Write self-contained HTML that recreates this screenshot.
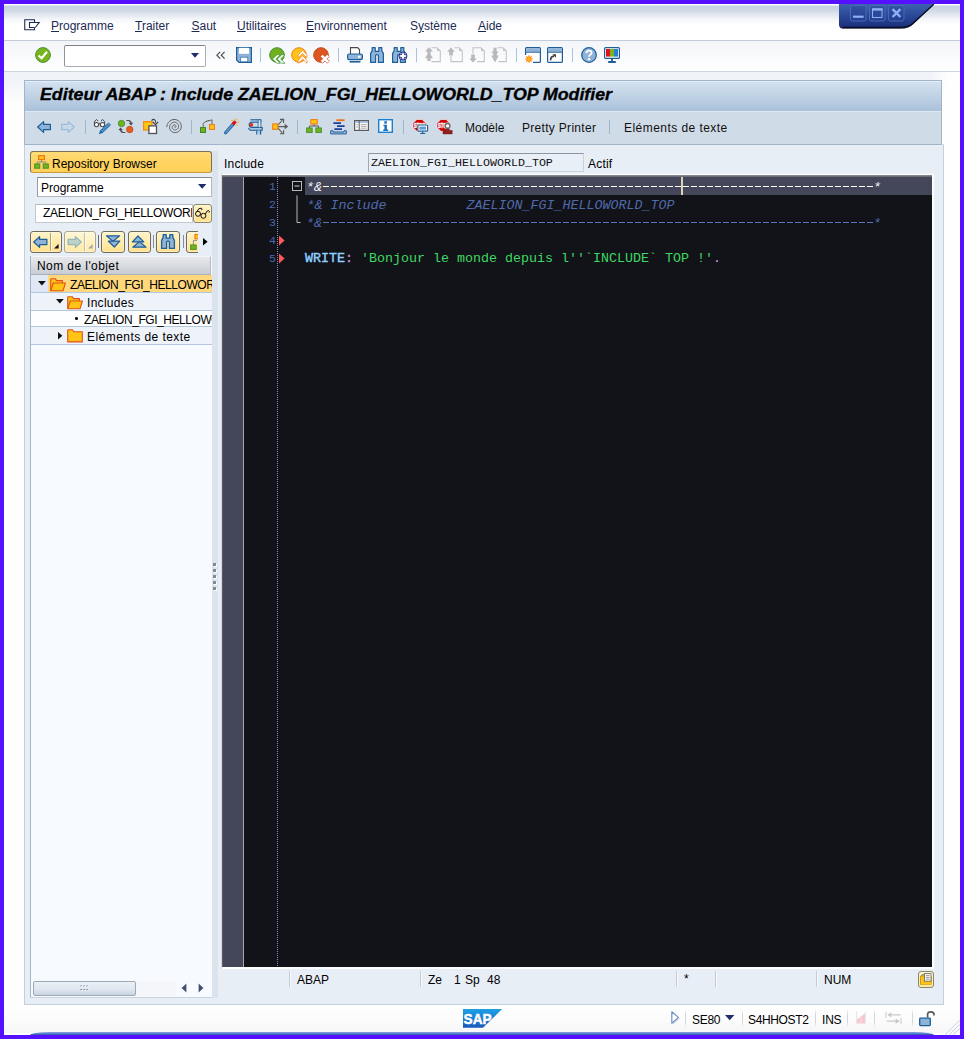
<!DOCTYPE html>
<html><head><meta charset="utf-8">
<style>
*{box-sizing:border-box;margin:0;padding:0}
html,body{width:964px;height:1039px;overflow:hidden;background:#5511ff}
body{font-family:"Liberation Sans",sans-serif;font-size:12px;color:#000;position:relative}
.a{position:absolute}
.t{position:absolute;white-space:pre;line-height:14px;height:14px}
.hl{position:absolute;left:4px;width:956px;height:1px}
.m{color:#1d2a55}
.vs{position:absolute;width:1px;background:#9db6d0}
svg{position:absolute;overflow:visible}
</style></head><body>
<!-- window background -->
<div class="a" style="left:4px;top:4px;width:956px;height:1031px;background:#fefefe"></div>
<div class="a" style="left:4px;top:4px;width:956px;height:36px;background:linear-gradient(#ffffff 0px,#ffffff 1px,#c7d2e1 2px,#cdd7e4 6px,#e3e8ef 11px,#f6f8fa 16px,#ffffff 21px)"></div>
<div class="hl" style="top:40px;background:#c3ccd8"></div>
<div class="a" style="left:4px;top:41px;width:956px;height:30px;background:linear-gradient(#f3f5f9,#ffffff)"></div>
<div class="hl" style="top:71px;background:#cdd5df"></div>
<div class="a" style="left:4px;top:72px;width:956px;height:32px;background:linear-gradient(#f0f3f8,#f0f3f8 25%,#fefefe)"></div>
<!-- menu bar -->
<svg style="left:24px;top:19px" width="17" height="12" viewBox="0 0 17 12"><path d="M10.5 3.5V0.75H0.75V10.75H10.5V8.5M10.5 8.5H5.5V3.5H15.2L11.2 8.5" fill="none" stroke="#1d2a55" stroke-width="1.1"/></svg>
<div class="t m" style="left:51px;top:19px"><u>P</u>rogramme</div>
<div class="t m" style="left:135px;top:19px"><u>T</u>raiter</div>
<div class="t m" style="left:191.5px;top:19px"><u>S</u>aut</div>
<div class="t m" style="left:237px;top:19px"><u>U</u>tilitaires</div>
<div class="t m" style="left:306px;top:19px"><u>E</u>nvironnement</div>
<div class="t m" style="left:410px;top:19px">S<u>y</u>stème</div>
<div class="t m" style="left:478px;top:19px"><u>A</u>ide</div>

<!-- standard toolbar -->
<svg style="left:35px;top:47px" width="16" height="16" viewBox="0 0 16 16"><circle cx="8" cy="8" r="7.4" fill="#78b41c" stroke="#4c9330" stroke-width="1"/><path d="M3.6 8.4L6.6 11.2L12 4.8" fill="none" stroke="#fff" stroke-width="2.1"/></svg>
<div class="a" style="left:64px;top:45px;width:142px;height:22px;background:#fff;border:1px solid #a9adb3;border-top-color:#7d8187;border-left-color:#8e9298;border-radius:2px"></div>
<svg style="left:191px;top:53px" width="8" height="5" viewBox="0 0 8 5"><path d="M0 0H8L4 4.8Z" fill="#1f2d6b"/></svg>
<svg style="left:216px;top:51px" width="10" height="9" viewBox="0 0 10 9"><path d="M4.2 0.8L0.9 4.2L4.2 7.6M8.6 0.8L5.3 4.2L8.6 7.6" fill="none" stroke="#4a4a4a" stroke-width="1.2"/></svg>
<svg style="left:235.5px;top:47px" width="16" height="16" viewBox="0 0 16 16"><path d="M0.6 0.6H15.4V15.4H3L0.6 13Z" fill="#8fb2d8" stroke="#1b5e98" stroke-width="1.2"/><rect x="3" y="0.8" width="10" height="6" fill="#fff"/><rect x="4.8" y="10.2" width="7" height="4.6" fill="#fff" stroke="#1b5e98" stroke-width="0.6"/></svg>
<div class="vs" style="left:260px;top:48px;height:14px;background:#a9c3dd"></div>
<svg style="left:269px;top:47px" width="16" height="16" viewBox="0 0 16 16"><circle cx="8" cy="8" r="7.3" fill="#70b01d" stroke="#3f8e33" stroke-width="1"/><path d="M8 7.7L3.5 12L8 16.3H11.3L6.8 12L11.3 7.7ZM12.8 7.7L8.3 12L12.8 16.3H16.1L11.6 12L16.1 7.7Z" fill="#fff" stroke="#3f8e33" stroke-width="0.7"/></svg>
<svg style="left:291px;top:47px" width="16" height="16" viewBox="0 0 16 16"><circle cx="8" cy="8" r="7.3" fill="#ffc414" stroke="#ef7d1c" stroke-width="1"/><path d="M11.6 3.3L16 7.8V10.9L11.6 6.7L7.2 10.9V7.8ZM11.6 8.7L16 13.2V16.3L11.6 12.1L7.2 16.3V13.2Z" fill="#fff" stroke="#ef7d1c" stroke-width="0.7"/></svg>
<svg style="left:313px;top:47px" width="16" height="16" viewBox="0 0 16 16"><circle cx="8" cy="8" r="7.3" fill="#dc571f" stroke="#c9471b" stroke-width="1"/><path d="M7.4 9.5L9.6 7.4L11.9 9.7L14.2 7.4L16.4 9.5L14.1 11.8L16.4 14.1L14.2 16.2L11.9 13.9L9.6 16.2L7.4 14.1L9.7 11.8Z" fill="#fff" stroke="#c9471b" stroke-width="0.6"/></svg>
<div class="vs" style="left:338px;top:48px;height:14px;background:#a9c3dd"></div>
<svg style="left:347px;top:47px" width="16" height="16" viewBox="0 0 16 16"><path d="M3.5 7V0.6H10.5L12.5 2.6V7" fill="#fff" stroke="#4a4a4a" stroke-width="1.1"/><rect x="0.6" y="7" width="14.8" height="5.6" rx="1.6" fill="#8fb2d8" stroke="#1b5e98" stroke-width="1.2"/><rect x="11" y="8.8" width="2.6" height="2" fill="#fff"/><path d="M2.6 14.8H13.4" stroke="#1b5e98" stroke-width="1.6"/></svg>
<svg style="left:370px;top:47px" width="14" height="16" viewBox="0 0 14 16"><path d="M2.2 0.6H5.2V4.4H8.8V0.6H11.8V3.6L13.4 6.6V15.4H8.4V8.6Q8.4 7.6 7 7.6Q5.6 7.6 5.6 8.6V15.4H0.6V6.6L2.2 3.6Z" fill="#8fb2d8" stroke="#1b5e98" stroke-width="1.2" stroke-linejoin="round"/></svg>
<svg style="left:392px;top:47px" width="16" height="16" viewBox="0 0 16 16"><path d="M2.2 0.6H5.2V4.4H8.8V0.6H11.8V3.6L13.4 6.6V15.4H8.4V8.6Q8.4 7.6 7 7.6Q5.6 7.6 5.6 8.6V15.4H0.6V6.6L2.2 3.6Z" fill="#8fb2d8" stroke="#1b5e98" stroke-width="1.2" stroke-linejoin="round"/><circle cx="11" cy="9" r="4" fill="#fff" stroke="#1f2f8f" stroke-width="1"/><path d="M11 5.8V12.2M7.8 9H14.2" stroke="#1f2f8f" stroke-width="3.4"/><path d="M11 6.2V11.8M8.2 9H13.8" stroke="#fff" stroke-width="2.2"/></svg>
<div class="vs" style="left:416px;top:48px;height:14px;background:#a9c3dd"></div>
<svg style="left:425px;top:47px" width="16" height="16" viewBox="0 0 16 16"><path d="M6.5 0.7H12L15.3 4V14.6H6.5" fill="none" stroke="#c3c3c3" stroke-width="1.1"/><path d="M12 0.7V4H15.3Z" fill="#c3c3c3"/><path d="M4 0.3L8 4.6H5.6V7.4L8 11.3H5.6V14H2.4V11.3H0L2.4 7.4V4.6H0Z" fill="#b9b9b9"/></svg>
<svg style="left:447px;top:47px" width="16" height="16" viewBox="0 0 16 16"><path d="M7.5 0.7H12L15.3 4V14.6H4V9" fill="none" stroke="#c3c3c3" stroke-width="1.1"/><path d="M12 0.7V4H15.3Z" fill="#c3c3c3"/><path d="M4 0.6L7.8 4.8H5.8V8.6H2.2V4.8H0.2Z" fill="#b9b9b9"/></svg>
<svg style="left:469px;top:47px" width="16" height="16" viewBox="0 0 16 16"><path d="M4 6.5V0.7H12L15.3 4V14.6H8" fill="none" stroke="#c3c3c3" stroke-width="1.1"/><path d="M12 0.7V4H15.3Z" fill="#c3c3c3"/><path d="M4 15.6L7.8 11.4H5.8V7.4H2.2V11.4H0.2Z" fill="#b9b9b9"/></svg>
<svg style="left:491px;top:47px" width="16" height="16" viewBox="0 0 16 16"><path d="M6.5 0.7H12L15.3 4V14.6H7.5" fill="none" stroke="#c3c3c3" stroke-width="1.1"/><path d="M12 0.7V4H15.3Z" fill="#c3c3c3"/><path d="M2.4 0.8H5.6V4.6H7.6L5.8 7V8.6H7.8L4 15.6L0.2 8.6H2.2V7L0.4 4.6H2.4Z" fill="#b9b9b9"/></svg>
<div class="vs" style="left:516px;top:48px;height:14px;background:#a9c3dd"></div>
<svg style="left:525px;top:47px" width="16" height="16" viewBox="0 0 16 16"><path d="M0.6 8V1.6Q0.6 0.6 1.6 0.6H14.4Q15.4 0.6 15.4 1.6V14.4Q15.4 15.4 14.4 15.4H8" fill="#fff" stroke="#1b5e98" stroke-width="1.2"/><rect x="1.2" y="1.2" width="13.6" height="3.6" fill="#8fb2d8"/><path d="M0.6 5.2H15.4" stroke="#1b5e98" stroke-width="1"/><circle cx="4" cy="12" r="2.6" fill="#ff9c12"/><path d="M4 8.2V15.8M0.2 12H7.8M1.3 9.3L6.7 14.7M6.7 9.3L1.3 14.7" stroke="#ff8a10" stroke-width="1.2"/><circle cx="4" cy="12" r="1.7" fill="#ffb420"/></svg>
<svg style="left:547px;top:47px" width="16" height="16" viewBox="0 0 16 16"><rect x="0.6" y="0.6" width="14.8" height="14.8" rx="1" fill="#fff" stroke="#1b5e98" stroke-width="1.2"/><rect x="1.2" y="1.2" width="13.6" height="3.6" fill="#8fb2d8"/><path d="M0.6 5.2H15.4" stroke="#1b5e98" stroke-width="1"/><path d="M3.6 13.4Q3.4 9.4 7 9.2" fill="none" stroke="#3c3c3c" stroke-width="1.7"/><path d="M5.4 7.2H9V10.8Z" fill="#3c3c3c"/></svg>
<div class="vs" style="left:572px;top:48px;height:14px;background:#a9c3dd"></div>
<svg style="left:581px;top:47px" width="16" height="16" viewBox="0 0 16 16"><circle cx="8" cy="8" r="7.3" fill="#8fb2d8" stroke="#1b5e98" stroke-width="1.2"/><path d="M5.4 6.2Q5.4 3.6 8 3.6Q10.6 3.6 10.6 5.8Q10.6 7.2 9.2 7.8Q8 8.4 8 9.8" fill="none" stroke="#fff" stroke-width="1.8"/><circle cx="8" cy="12.2" r="1.2" fill="#fff"/></svg>
<svg style="left:603.5px;top:47px" width="16" height="16" viewBox="0 0 16 16"><rect x="0.6" y="0.6" width="14.8" height="10.8" rx="1" fill="#fff" stroke="#1b5e98" stroke-width="1.2"/><rect x="2" y="2" width="4" height="7.6" fill="#e0121a"/><rect x="6" y="2" width="4" height="7.6" fill="#7ab51d"/><rect x="10" y="2" width="4" height="7.6" fill="#2b7fd0"/><path d="M8 11.4V14.4M4.2 15H11.8" stroke="#1b5e98" stroke-width="1.8"/></svg>

<!-- window controls -->
<svg style="left:830px;top:0px" width="120" height="36" viewBox="830 0 120 36">
<defs><linearGradient id="wg" x1="0" y1="0" x2="0" y2="1"><stop offset="0" stop-color="#3e62b0"/><stop offset="0.5" stop-color="#2a4896"/><stop offset="1" stop-color="#1a2f7c"/></linearGradient>
<linearGradient id="bg2" x1="0" y1="0" x2="0" y2="1"><stop offset="0" stop-color="#3353a3"/><stop offset="1" stop-color="#223d90"/></linearGradient></defs>
<path d="M839.5 4H934.5L914 23.5Q909 28.8 901 28.8H843Q839.5 28.8 839.5 25.5Z" fill="#070b25" opacity="0.85"/>
<path d="M839 4H934L913 23Q908.5 27.5 901 27.5H842.5Q839 27.5 839 24.5Z" fill="url(#wg)"/><path d="M933.6 4.4L913 23.2Q908.5 27.4 901 27.4H843" fill="none" stroke="#05081c" stroke-width="1.3" opacity="0.9"/>
<rect x="850.5" y="5.5" width="15.5" height="15.5" rx="2" fill="url(#bg2)" stroke="#4d6cb9" stroke-width="0.9"/>
<rect x="869.5" y="5.5" width="15.5" height="15.5" rx="2" fill="url(#bg2)" stroke="#4d6cb9" stroke-width="0.9"/>
<rect x="888.5" y="5.5" width="15.5" height="15.5" rx="2" fill="url(#bg2)" stroke="#4d6cb9" stroke-width="0.9"/>
<rect x="853" y="15.6" width="10.6" height="2.2" fill="#8db0f4"/>
<rect x="872.5" y="9" width="9.5" height="8.5" fill="none" stroke="#8db0f4" stroke-width="1.1"/><rect x="872" y="8.4" width="10.5" height="2.2" fill="#8db0f4"/>
<path d="M892.6 9.2L900.4 17M900.4 9.2L892.6 17" stroke="#8db0f4" stroke-width="2.4"/>
</svg>

<!-- main container -->
<div class="a" style="left:930px;top:72px;width:30px;height:32px;background:linear-gradient(90deg,rgba(254,254,254,0),#fefefe 60%)"></div>
<div class="a" style="left:24px;top:144px;width:920px;height:861px;background:#e8eef6;border:1px solid #c3cfdc;border-top:none"></div>
<div class="a" style="left:24px;top:80px;width:918px;height:65px;border:1px solid #a1b5c9"></div>
<div class="a" style="left:25px;top:81px;width:916px;height:30px;background:linear-gradient(#d3e1ef 0%,#c3d4e6 40%,#abc2dc 100%);border-top:1px solid #e6eef6"></div>
<div class="a" style="left:25px;top:111px;width:916px;height:33px;background:#cfdbe7;border-top:1px solid #dfe8f0"></div>
<div class="t" style="left:40px;top:85px;font-size:16px;line-height:20px;height:20px;font-weight:bold;font-style:italic;-webkit-text-stroke:0.3px #000;transform-origin:0 0;transform:scaleX(1.11)">Editeur ABAP : Include ZAELION_FGI_HELLOWORLD_TOP Modifier</div>

<!-- application toolbar -->
<svg style="left:37px;top:121px" width="14" height="12" viewBox="0 0 14 12"><path d="M0.7 6L6.6 0.6V3.4H13.4V8.6H6.6V11.4Z" fill="#8fb2d8" stroke="#1b5e98" stroke-width="1.2" stroke-linejoin="round"/></svg>
<svg style="left:61px;top:121px" width="14" height="12" viewBox="0 0 14 12"><path d="M13.3 6L7.4 0.6V3.4H0.6V8.6H7.4V11.4Z" fill="#c6d8ea" stroke="#9dbbd7" stroke-width="1.2" stroke-linejoin="round"/></svg>
<div class="vs" style="left:85px;top:120px;height:14px"></div>
<svg style="left:94px;top:118px" width="17" height="17" viewBox="0 0 17 17"><path d="M0.4 5.2V3.6L2.5 1.4L4 3M7 3L8.5 1.4L10.7 3.6V5.2M4.6 6.2Q5.5 5.2 6.4 6.2" fill="none" stroke="#4a4a4a" stroke-width="1"/><circle cx="2.5" cy="6.6" r="2.15" fill="#fff" stroke="#4a4a4a" stroke-width="1.1"/><circle cx="8.5" cy="6.6" r="2.15" fill="#fff" stroke="#4a4a4a" stroke-width="1.1"/><path d="M8.57 14.6L6.57 12.5L14.5 4.95L16.5 7.05Z" fill="#5b9bd5" stroke="#0f5f95" stroke-width="0.8"/><path d="M5.25 15.75L6.57 12.5L8.57 14.6Z" fill="#1b6aa8" stroke="#0f5f95" stroke-width="0.6"/><path d="M8.1 11L10.1 13.1M9.7 9.5L11.7 11.6M11.3 8L13.3 10.1M12.9 6.5L14.9 8.6" stroke="#0f5f95" stroke-width="0.7"/></svg>
<svg style="left:118px;top:119px" width="16" height="15" viewBox="0 0 16 15"><circle cx="3.5" cy="4.5" r="3.2" fill="#72b21e" stroke="#3f8a2e" stroke-width="0.8"/><circle cx="11.75" cy="10.5" r="3.2" fill="#e0601c" stroke="#c9421b" stroke-width="0.8"/><path d="M8.4 1.5H10.4Q13 1.8 13 4.4" fill="none" stroke="#4a4a4a" stroke-width="1.2"/><path d="M10.7 3.7H15.3L13 6.5Z" fill="#4a4a4a"/><path d="M7.4 13.5H5.2Q2.6 13.2 2.6 10.6" fill="none" stroke="#4a4a4a" stroke-width="1.2"/><path d="M0.3 11.3H4.9L2.6 8.5Z" fill="#4a4a4a"/></svg>
<svg style="left:143px;top:119px" width="16" height="16" viewBox="0 0 16 16"><rect x="0.6" y="2.6" width="8.4" height="8.4" fill="#ffc414" stroke="#f08c12" stroke-width="1.2"/><rect x="5.9" y="6.9" width="7.6" height="7.6" fill="#fff" stroke="#505050" stroke-width="1.3"/><path d="M8.6 1.6Q9.6 0.2 11.2 0.4Q12.8 0.9 12.6 3.6" fill="none" stroke="#404040" stroke-width="1.1"/><path d="M9.8 2.8L12.5 5.6L15.2 2.8" fill="none" stroke="#404040" stroke-width="1.2"/></svg>
<svg style="left:166px;top:118px" width="18" height="18" viewBox="0 0 18 18"><path d="M0.85 8.75 L1.00 7.61 L1.31 6.50 L1.77 5.47 L2.38 4.52 L3.11 3.67 L3.96 2.95 L4.89 2.37 L5.88 1.93 L6.93 1.65 L7.99 1.52 L9.05 1.55 L10.09 1.73 L11.08 2.06 L12.00 2.53 L12.84 3.12 L13.57 3.83 L14.19 4.62 L14.68 5.49 L15.03 6.41 L15.24 7.37 L15.31 8.34 L15.24 9.30 L15.03 10.22 L14.69 11.10 L14.23 11.91 L13.66 12.64 L12.99 13.27 L12.25 13.79 L11.45 14.19 L10.61 14.47 L9.74 14.61 L8.87 14.63 L8.02 14.53 L7.20 14.30 L6.43 13.95 L5.73 13.51 L5.11 12.97 L4.58 12.35 L4.15 11.67 L3.84 10.94 L3.63 10.18 L3.54 9.41 L3.56 8.64 L3.69 7.89 L3.93 7.18 L4.27 6.53 L4.69 5.93 L5.20 5.41 L5.76 4.98 L6.38 4.64 L7.02 4.39 L7.69 4.25 L8.37 4.20 L9.03 4.26 L9.67 4.41 L10.27 4.65 L10.83 4.97 L11.32 5.37 L11.74 5.82 L12.08 6.33 L12.35 6.87 L12.52 7.44 L12.61 8.01 L12.61 8.59 L12.53 9.15 L12.37 9.68 L12.14 10.18 L11.84 10.62 L11.49 11.01 L11.09 11.34 L10.65 11.60 L10.18 11.79 L9.70 11.91 L9.22 11.95 L8.75 11.93 L8.30 11.83 L7.87 11.67 L7.48 11.45 L7.13 11.18 L6.84 10.88 L6.59 10.53 L6.41 10.17 L6.29 9.79 L6.22 9.40 L6.22 9.02 L6.27 8.65 L6.37 8.30 L6.53 7.98 L6.72 7.69 L6.95 7.44 L7.20 7.23 L7.48 7.07 L7.77 6.96 L8.06 6.90 L8.35 6.88 L8.63 6.90 L8.90 6.97 L9.14 7.07 L9.36 7.20 L9.55 7.36 L9.70 7.55 L9.82 7.74 L9.91 7.94 L9.96 8.15 L9.97 8.35 L9.95 8.55 L9.91 8.73 L9.84 8.89 L9.74 9.03 L9.64 9.14 L9.52 9.24 L9.39 9.30 L9.26 9.34 L9.13 9.36 L9.02 9.35 L8.91 9.32 L8.82 9.27 L8.74 9.22 L8.68 9.15 L8.64 9.07" fill="none" stroke="#5c5c5c" stroke-width="1" stroke-linecap="round"/></svg>
<div class="vs" style="left:191px;top:120px;height:14px"></div>
<svg style="left:200px;top:118px" width="16" height="16" viewBox="0 0 16 16"><path d="M3.2 9.4V5.4L6.6 3V4L8.4 2V3L12 1.8V6" fill="none" stroke="#5a5a5a" stroke-width="0.9"/><rect x="0.55" y="9.55" width="4.9" height="4.9" fill="#76b41e" stroke="#3f8a2e" stroke-width="1.1"/><rect x="9.55" y="6.55" width="4.9" height="4.9" fill="#ffc414" stroke="#f0801c" stroke-width="1.1"/></svg>
<svg style="left:224px;top:118px" width="16" height="17" viewBox="0 0 16 17"><path d="M1.6 14.8L9.6 5.6" stroke="#1b5e98" stroke-width="3.2" stroke-linecap="round"/><path d="M1.8 14.6L9.4 5.8" stroke="#5d9ad4" stroke-width="1.6" stroke-linecap="round"/><path d="M8.8 6.4L11.6 3.2" stroke="#e0121a" stroke-width="3.2"/><path d="M10.4 0.6L10.8 2.2M13 0.8L12.4 2.2M7 2.2L9.4 2.8M13.4 4.4L15.4 4.2M12.8 6.4L13.4 8" stroke="#ffb01a" stroke-width="1"/></svg>
<svg style="left:248px;top:119px" width="16" height="16" viewBox="0 0 16 16"><path d="M2.4 0.7H12.8V3.2H3.6Q1.2 3.4 1.2 5.8Q1.2 8.2 3.6 8.4H14.2V11.2H2.4Q0.8 10.8 0.6 9" fill="#a9c6e4" stroke="#1b5e98" stroke-width="1.1" stroke-linejoin="round"/><path d="M10.2 0.7V8.4M12.8 0.7V8.4" stroke="#1b5e98" stroke-width="1"/><rect x="10.6" y="1.2" width="1.8" height="7" fill="#cfe0f0"/><path d="M8.8 11.2V15.4M12.6 11.2V15.4" stroke="#1b5e98" stroke-width="1.2"/><rect x="9.4" y="11.6" width="2.6" height="3.8" fill="#a9c6e4"/><circle cx="3.4" cy="5.8" r="1.9" fill="#e0331a"/></svg>
<svg style="left:272px;top:118px" width="17" height="17" viewBox="0 0 17 17"><path d="M6 8.6H14M6 7L10.4 2.2M6 10.2L10.4 15" stroke="#5a5a5a" stroke-width="1.1" fill="none"/><path d="M12.6 5.8L16.2 8.6L12.6 11.4Z" fill="#5a5a5a"/><path d="M8 1.4H11.6V5M8 15.8H11.6V12.2" fill="none" stroke="#5a5a5a" stroke-width="1.1"/><rect x="0.7" y="5.9" width="5" height="5.4" fill="#ffc414" stroke="#f0801c" stroke-width="1.2"/></svg>
<div class="vs" style="left:297px;top:120px;height:14px"></div>
<svg style="left:306px;top:119px" width="16" height="14" viewBox="0 0 16 14"><path d="M8 5V7H3.4V9M8 7H12.6V9" fill="none" stroke="#5a5a5a" stroke-width="1"/><rect x="4.8" y="0.6" width="6.4" height="4.4" fill="#ffc414" stroke="#f0801c" stroke-width="1.1"/><rect x="0.7" y="9" width="5.4" height="4.4" fill="#76b41e" stroke="#4c9330" stroke-width="1.1"/><rect x="9.9" y="9" width="5.4" height="4.4" fill="#76b41e" stroke="#4c9330" stroke-width="1.1"/></svg>
<svg style="left:330px;top:119px" width="17" height="16" viewBox="0 0 17 16"><path d="M6.4 1.2H14.6" stroke="#f0701c" stroke-width="1.8"/><path d="M3.4 4.2H11M7 7.2H14.6M4.4 10.2H12" stroke="#1f3f9f" stroke-width="1.8"/><path d="M0.7 11.8V14.9H16.3V11.8H14V13H3V11.8Z" fill="#a9c6e4" stroke="#1b5e98" stroke-width="1" stroke-linejoin="round"/></svg>
<svg style="left:354px;top:120px" width="15" height="11" viewBox="0 0 15 11"><rect x="0.6" y="0.6" width="13.8" height="9.8" fill="#fff" stroke="#5a5a5a" stroke-width="1.2"/><rect x="1.2" y="1.2" width="12.6" height="1.6" fill="#8fb2d8"/><path d="M5.2 1.2V10" stroke="#5a5a5a" stroke-width="1"/><path d="M2.2 4.8H4M2.2 7H4M6.6 4.6H12.6M6.6 6.4H12.6M6.6 8.2H12.6" stroke="#a0a0a0" stroke-width="0.9"/></svg>
<svg style="left:378px;top:119px" width="15" height="14" viewBox="0 0 15 14"><rect x="0.7" y="0.7" width="13.6" height="12.6" fill="#fff" stroke="#1b7fd0" stroke-width="1.4"/><rect x="6.3" y="2.2" width="2.6" height="2.4" fill="#1b6fc0"/><path d="M5.4 5.8H8.9V10.6H10.2V11.9H5.2V10.6H6.4V7.1H5.4Z" fill="#1b6fc0"/></svg>
<div class="vs" style="left:403px;top:120px;height:14px"></div>
<svg style="left:413px;top:119px" width="16" height="16" viewBox="0 0 16 16"><path d="M3.9 0.5H9.1L13 4.2V8.6L9.1 12.3H3.9L0 8.6V4.2Z" fill="#d00000" stroke="#f6eaea" stroke-width="0.7"/><text x="0.9" y="8.7" font-family="Liberation Sans" font-weight="bold" font-size="6.8" fill="#fff" stroke="#fff" stroke-width="0.45" textLength="11.4" lengthAdjust="spacingAndGlyphs">STOP</text><rect x="4.2" y="5.4" width="11" height="7.4" rx="1.2" fill="#fff"/><rect x="4.8" y="6" width="9.8" height="6.2" rx="0.9" fill="#fff" stroke="#1b5e98" stroke-width="1.2"/><rect x="6.4" y="7.6" width="6.6" height="3" fill="#5d9ad4"/><path d="M9.7 12.4V14.2M7.2 14.5H12.2" stroke="#1b5e98" stroke-width="1.2"/></svg>
<svg style="left:437px;top:119px" width="16" height="16" viewBox="0 0 16 16"><path d="M3.9 0.5H9.1L13 4.2V8.6L9.1 12.3H3.9L0 8.6V4.2Z" fill="#d00000" stroke="#f6eaea" stroke-width="0.7"/><text x="0.9" y="8.7" font-family="Liberation Sans" font-weight="bold" font-size="6.8" fill="#fff" stroke="#fff" stroke-width="0.45" textLength="11.4" lengthAdjust="spacingAndGlyphs">STOP</text><circle cx="10.6" cy="6.9" r="3.4" fill="#f3eeee"/><circle cx="10.6" cy="6.9" r="2.4" fill="#fff" stroke="#6a6a6a" stroke-width="1.4"/><path d="M6 14.9V11.4H8.2L9 10.2H12.2L13 11.4H15.2V14.9Z" fill="#8b2020" stroke="#7a1414" stroke-width="0.5"/></svg>
<div class="t" style="left:465px;top:121px;color:#111">Modèle</div>
<div class="t" style="left:522px;top:121px;color:#111;letter-spacing:0.3px">Pretty Printer</div>
<div class="vs" style="left:609px;top:120px;height:14px"></div>
<div class="t" style="left:624px;top:121px;color:#111;letter-spacing:0.45px">Eléments de texte</div>

<!-- left panel -->
<style>
.yb{position:absolute;border:1px solid #6f6a5c;border-radius:3px;background:linear-gradient(#fff4c8 0%,#ffeaa6 55%,#ffe08a 100%);box-shadow:inset 0 0 0 1px rgba(255,255,255,0.35)}
.yb.dis{border-color:#a9a594;background:linear-gradient(#fff7d6 0%,#fff0bc 55%,#ffe9a6 100%)}
.row{position:absolute;left:31px;width:181px;border-bottom:1px solid #b3c7df}
</style>
<div class="a" style="left:30px;top:151px;width:182px;height:22px;border:1px solid #7a7258;border-bottom-color:#c89a3a;border-radius:3px;background:linear-gradient(#ffdc78 0%,#ffd461 50%,#ffd05a 100%)"></div>
<svg style="left:34px;top:155px" width="15" height="14" viewBox="0 0 15 14"><path d="M7.5 4.6V7H3.2V9M7.5 7H11.8V9" fill="none" stroke="#8a8a8a" stroke-width="1"/><rect x="4.6" y="0.6" width="5.8" height="4" fill="#ffc414" stroke="#f0701c" stroke-width="1.1"/><rect x="0.7" y="9" width="5" height="4.2" fill="#76b41e" stroke="#4c9330" stroke-width="1.1"/><rect x="9.3" y="9" width="5" height="4.2" fill="#76b41e" stroke="#4c9330" stroke-width="1.1"/></svg>
<div class="t" style="left:52px;top:157px">Repository Browser</div>
<div class="a" style="left:37px;top:177px;width:175px;height:20px;background:#fff;border:1px solid #b4b8be;border-top-color:#85898f;border-left-color:#999da3"></div>
<div class="t" style="left:41px;top:181px">Programme</div>
<svg style="left:198px;top:184px" width="9" height="5" viewBox="0 0 9 5"><path d="M0 0H8.4L4.2 4.8Z" fill="#1f2d6b"/></svg>
<div class="a" style="left:35px;top:204px;width:158px;height:19px;background:#fff;border:1px solid #c3c9d1;border-top-color:#b3b9c1;overflow:hidden"><div class="t" style="left:7px;top:1px;letter-spacing:-0.3px">ZAELION_FGI_HELLOWORLD</div></div>
<div class="yb" style="left:193px;top:204px;width:19px;height:19px;border-color:#8a8468"></div>
<svg style="left:195px;top:207px" width="16" height="13" viewBox="0 0 16 13"><circle cx="3" cy="6.8" r="2.5" fill="none" stroke="#111" stroke-width="1"/><circle cx="8.4" cy="8.8" r="2.5" fill="none" stroke="#111" stroke-width="1"/><path d="M2 4.6Q3.6 0.4 6.4 1.2Q7.6 2 6.6 3.2M10.4 7.2Q11.4 3.2 13.8 3.6Q15 4.4 14 5.6M5.4 7.6L6 8" fill="none" stroke="#111" stroke-width="1"/></svg>
<!-- nav buttons -->
<div class="yb" style="left:30px;top:231px;width:32px;height:22px"></div>
<div class="a" style="left:50px;top:233px;width:1px;height:18px;background:#a9a28a"></div><div class="a" style="left:51px;top:233px;width:1px;height:18px;background:#fff8dc"></div>
<svg style="left:33px;top:236px" width="15" height="12" viewBox="0 0 15 12"><path d="M0.7 6L6.6 0.6V3.4H13.9V8.6H6.6V11.4Z" fill="#8fb2d8" stroke="#1b5e98" stroke-width="1.2" stroke-linejoin="round"/></svg>
<svg style="left:54px;top:244px" width="5" height="5" viewBox="0 0 5 5"><path d="M4.6 0V4.6H0Z" fill="#15152a"/></svg>
<div class="yb dis" style="left:64px;top:231px;width:32px;height:22px"></div>
<div class="a" style="left:84px;top:233px;width:1px;height:18px;background:#c4bea8"></div><div class="a" style="left:85px;top:233px;width:1px;height:18px;background:#fffbe8"></div>
<svg style="left:67px;top:236px" width="15" height="12" viewBox="0 0 15 12"><path d="M14.3 6L8.4 0.6V3.4H1.1V8.6H8.4V11.4Z" fill="#bcd2c8" stroke="#8fb8b6" stroke-width="1.2" stroke-linejoin="round"/></svg>
<svg style="left:88px;top:244px" width="5" height="5" viewBox="0 0 5 5"><path d="M4.6 0V4.6H0Z" fill="#a8a6b0"/></svg>
<div class="a" style="left:98px;top:235px;width:1px;height:13px;background:#6e6e6e"></div>
<div class="yb" style="left:101px;top:231px;width:24px;height:22px"></div>
<svg style="left:105px;top:235px" width="16" height="13" viewBox="0 0 16 13"><path d="M1.4 0.8H14.6L8 6.4Z" fill="#8fb2d8" stroke="#1b5e98" stroke-width="1.2" stroke-linejoin="round"/><path d="M3.4 6.2H14.8L9.4 12Z" fill="#8fb2d8" stroke="#1b5e98" stroke-width="1.2" stroke-linejoin="round"/></svg>
<div class="yb" style="left:127.5px;top:231px;width:23.5px;height:22px"></div>
<svg style="left:131px;top:235px" width="16" height="13" viewBox="0 0 16 13"><path d="M1.4 6.8H12.8L7 1Z" fill="#8fb2d8" stroke="#1b5e98" stroke-width="1.2" stroke-linejoin="round"/><path d="M1.8 12.2H15L8.4 6.6Z" fill="#8fb2d8" stroke="#1b5e98" stroke-width="1.2" stroke-linejoin="round"/></svg>
<div class="a" style="left:153px;top:235px;width:1px;height:13px;background:#8e8e8e"></div>
<div class="yb" style="left:156px;top:231px;width:24px;height:22px"></div>
<svg style="left:161px;top:234px" width="14" height="15" viewBox="0 0 14 16" preserveAspectRatio="none"><path d="M2.2 0.6H5.2V4.4H8.8V0.6H11.8V3.6L13.4 6.6V15.4H8.4V8.6Q8.4 7.6 7 7.6Q5.6 7.6 5.6 8.6V15.4H0.6V6.6L2.2 3.6Z" fill="#8fb2d8" stroke="#1b5e98" stroke-width="1.3" stroke-linejoin="round"/></svg>
<div class="a" style="left:182.5px;top:235px;width:1px;height:13px;background:#8e8e8e"></div>
<div class="a" style="left:185.5px;top:231px;width:12px;height:22px;overflow:hidden"><div class="yb" style="left:0;top:0;width:24px;height:22px"></div>
<svg style="left:4px;top:3px" width="10" height="16" viewBox="0 0 10 16"><path d="M3.4 12V6.4H7" fill="none" stroke="#8a8a8a" stroke-width="1"/><rect x="5" y="0.6" width="5" height="4.2" fill="#ffc414" stroke="#f0701c" stroke-width="1.1"/><rect x="0.7" y="11" width="5.4" height="4.4" fill="#76b41e" stroke="#4c9330" stroke-width="1.1"/></svg></div>
<svg style="left:203px;top:238px" width="5" height="8" viewBox="0 0 5 8"><path d="M0 0L4.6 3.8L0 7.6Z" fill="#000"/></svg>
<!-- tree -->
<div class="a" style="left:30px;top:256px;width:182px;height:742px;background:#f7faff;border-left:1px solid #a3b4c8;border-bottom:1px solid #c9d3df"></div>
<div class="a" style="left:31px;top:256px;width:180px;height:19px;background:linear-gradient(#e6e8eb 0%,#dadde1 45%,#c9cdd3 100%);border-top:1px solid #f4f5f7;border-right:1px solid #b4b9c0;border-bottom:1px solid #aab0b8"></div>
<div class="t" style="left:37px;top:258.7px;letter-spacing:0.42px">Nom de l'objet</div>
<div class="row" style="top:275px;height:18px;background:#dfe8f4"></div>
<div class="a" style="left:48px;top:275px;width:164px;height:17px;background:#ffd77c;overflow:hidden"><div class="t" style="left:22px;top:3px;letter-spacing:-0.45px">ZAELION_FGI_HELLOWORLD</div></div>
<svg style="left:38px;top:281px" width="8" height="5" viewBox="0 0 8 5"><path d="M0 0H7.8L3.9 4.4Z" fill="#111"/></svg>
<svg style="left:50px;top:278px" width="16" height="14" viewBox="0 0 16 14"><path d="M0.7 12.6V1.4Q0.7 0.7 1.4 0.7H5.2L6.6 2.6H12.4V5" fill="#ffc414" stroke="#e0501c" stroke-width="1.1" stroke-linejoin="round"/><path d="M0.8 12.8L3.2 5H15.4L13 12.8Z" fill="#ffc414" stroke="#e0501c" stroke-width="1.1" stroke-linejoin="round"/></svg>
<div class="row" style="top:293px;height:18px;background:#eef2f9"></div>
<svg style="left:56px;top:299px" width="8" height="5" viewBox="0 0 8 5"><path d="M0 0H7.8L3.9 4.4Z" fill="#111"/></svg>
<svg style="left:67px;top:296px" width="16" height="14" viewBox="0 0 16 14"><path d="M0.7 12.6V1.4Q0.7 0.7 1.4 0.7H5.2L6.6 2.6H12.4V5" fill="#ffc414" stroke="#e0501c" stroke-width="1.1" stroke-linejoin="round"/><path d="M0.8 12.8L3.2 5H15.4L13 12.8Z" fill="#ffc414" stroke="#e0501c" stroke-width="1.1" stroke-linejoin="round"/></svg>
<div class="t" style="left:87px;top:296px;letter-spacing:0.3px">Includes</div>
<div class="row" style="top:311px;height:16px;background:#fdfeff"></div><div class="a" style="left:31px;top:309px;width:181px;height:18px;overflow:hidden"><div class="t" style="left:53px;top:3.5px;letter-spacing:-0.45px">ZAELION_FGI_HELLOWORLD</div></div>
<div class="a" style="left:75px;top:317px;width:3px;height:3px;background:#111;border-radius:1.2px"></div>
<div class="row" style="top:327px;height:18px;background:#eef2f9"></div>
<svg style="left:58px;top:332px" width="5" height="8" viewBox="0 0 5 8"><path d="M0 0L4.4 3.7L0 7.4Z" fill="#111"/></svg>
<svg style="left:67px;top:329px" width="16" height="14" viewBox="0 0 16 14"><path d="M0.7 12.9V1.4Q0.7 0.7 1.4 0.7H5.4L6.8 2.8H15.3V12.9Z" fill="#ffc414" stroke="#e0501c" stroke-width="1.1" stroke-linejoin="round"/></svg>
<div class="t" style="left:87px;top:329.5px;letter-spacing:0.45px">Eléments de texte</div>
<!-- tree h scrollbar -->
<div class="a" style="left:33px;top:981px;width:103px;height:15px;border:1px solid #9fa9b5;border-radius:2px;background:linear-gradient(#eaf0f6 0%,#dde6ef 60%,#c8d4e0 100%)"></div>
<svg style="left:80px;top:985px" width="9" height="7" viewBox="0 0 9 7"><path d="M0.5 1H2M3.5 1H5M6.5 1H8M0.5 4.6H2M3.5 4.6H5M6.5 4.6H8" stroke="#7d8894" stroke-width="1.2"/><path d="M1 2H2.5M4 2H5.5M7 2H8.5M1 5.6H2.5M4 5.6H5.5M7 5.6H8.5" stroke="#fff" stroke-width="0.9"/></svg>
<div class="a" style="left:136px;top:981px;width:40px;height:15px;background:#f4f6f9"></div>
<svg style="left:181px;top:983px" width="6" height="10" viewBox="0 0 6 10"><path d="M5.4 0.4V9.6L0.6 5Z" fill="#3f5068"/></svg>
<svg style="left:198px;top:983px" width="6" height="10" viewBox="0 0 6 10"><path d="M0.6 0.4V9.6L5.4 5Z" fill="#3f5068"/></svg>
<!-- sash -->
<div class="a" style="left:212px;top:151px;width:6px;height:847px;background:#dbe4ec"></div>
<svg style="left:212px;top:563px" width="6" height="30" viewBox="0 0 6 30"><rect x="1" y="0" width="3" height="3" fill="#808a9b"/><path d="M2 3.5H4.5V1" fill="none" stroke="#fff" stroke-width="1"/><rect x="1" y="6" width="3" height="3" fill="#808a9b"/><path d="M2 9.5H4.5V7" fill="none" stroke="#fff" stroke-width="1"/><rect x="1" y="12" width="3" height="3" fill="#808a9b"/><path d="M2 15.5H4.5V13" fill="none" stroke="#fff" stroke-width="1"/><rect x="1" y="18" width="3" height="3" fill="#808a9b"/><path d="M2 21.5H4.5V19" fill="none" stroke="#fff" stroke-width="1"/><rect x="1" y="24" width="3" height="3" fill="#808a9b"/><path d="M2 27.5H4.5V25" fill="none" stroke="#fff" stroke-width="1"/></svg>

<!-- editor header -->
<div class="t" style="left:224px;top:157px;letter-spacing:0.2px">Include</div>
<div class="a" style="left:368px;top:153px;width:216px;height:19px;background:#e9eff7;border:1px solid #c9d1db;border-top-color:#8d959f;border-left-color:#a1a9b3"></div>
<div class="t" style="left:371px;top:155.5px;font-family:'Liberation Mono',monospace;font-size:11.67px;color:#111">ZAELION_FGI_HELLOWORLD_TOP</div>
<div class="t" style="left:588px;top:157px;letter-spacing:0.2px">Actif</div>
<!-- editor frame -->
<div class="a" style="left:221px;top:173px;width:713px;height:796px;background:#fdfdfe;border-top:1px solid #eef1f5;border-left:1px solid #d2d6dc"></div>
<div class="a" style="left:222px;top:175px;width:710px;height:792px;background:#121318;border-left:1px solid #5a5b66"></div><div class="a" style="left:222px;top:175px;width:710px;height:2px;background:linear-gradient(#8f9097,#62636e)"></div>
<div class="a" style="left:223px;top:177px;width:20px;height:790px;background:#44465a"></div>
<div class="a" style="left:243px;top:177px;width:1px;height:790px;background:#a8a8a8"></div>
<div class="a" style="left:277px;top:177px;width:1px;height:790px;background:repeating-linear-gradient(#7f8fd0 0px,#7f8fd0 1px,#121318 1px,#121318 2px)"></div>
<div class="a" style="left:305px;top:177px;width:627px;height:18px;background:#44465a"></div>
<style>
.ln{position:absolute;left:244px;width:32px;text-align:right;font-family:"Liberation Mono",monospace;font-size:11.5px;line-height:18px;height:18px;color:#4a69b0}
.cl{position:absolute;left:305px;white-space:pre;font-family:"Liberation Mono",monospace;font-size:13.333px;line-height:18px;height:18px}
.cm{color:#506aac;font-style:italic}
</style>
<div class="ln" style="top:178px">1</div>
<div class="ln" style="top:196px">2</div>
<div class="ln" style="top:214px">3</div>
<div class="ln" style="top:232px">4</div>
<div class="ln" style="top:250px">5</div>
<svg style="left:292px;top:181px" width="10" height="43" viewBox="0 0 10 43"><rect x="0.5" y="0.5" width="9" height="9" fill="none" stroke="#b8b8b8" stroke-width="1"/><path d="M2.5 5H7.5" stroke="#d4d4d4" stroke-width="1"/><path d="M5 14.4V41.5H8.6" fill="none" stroke="#b8b8b8" stroke-width="1"/></svg>
<svg style="left:278.6px;top:235.2px" width="6" height="11" viewBox="0 0 6 11"><path d="M0 0.4L5.6 5.4L0 10.4Z" fill="#ff5a5a"/></svg>
<svg style="left:278.6px;top:253.2px" width="6" height="11" viewBox="0 0 6 11"><path d="M0 0.4L5.6 5.4L0 10.4Z" fill="#ff5a5a"/></svg>
<div class="cl" style="top:179px;left:306px;color:#f4f4f4;font-style:italic">*&amp;</div><div class="cl" style="top:179px;left:873px;color:#f4f4f4;font-style:italic">*</div><div class="a" style="left:321px;top:186px;width:552px;height:1px;background:repeating-linear-gradient(90deg,rgba(0,0,0,0) 0px,rgba(0,0,0,0) 2px,#fffdf4 2px,#fffdf4 8px)"></div>
<div class="cl cm" style="top:197px;left:306.5px">*&amp; Include          ZAELION_FGI_HELLOWORLD_TOP</div>
<div class="cl cm" style="top:215px;left:306px">*&amp;</div><div class="cl cm" style="top:215px;left:873px">*</div><div class="a" style="left:321px;top:222px;width:552px;height:1px;background:repeating-linear-gradient(90deg,rgba(0,0,0,0) 0px,rgba(0,0,0,0) 2px,#5a76ba 2px,#5a76ba 8px)"></div>
<div class="cl" style="top:250px"><span style="color:#8fd2ff;-webkit-text-stroke:0.4px #8fd2ff">WRITE</span><span style="color:#b88ad8;-webkit-text-stroke:0.4px #b88ad8">:</span> <span style="color:#3fd863">'Bonjour le monde depuis l''`INCLUDE` TOP !'</span><span style="color:#b8a0e8">.</span></div>
<div class="a" style="left:681px;top:177px;width:2px;height:18px;background:#d9d5b2"></div>
<!-- editor status -->
<style>.es{position:absolute;top:971px;width:2px;height:16px;border-left:1px solid #c2cad5;border-right:1px solid #f8fafc}</style>
<div class="es" style="left:289px"></div><div class="es" style="left:420px"></div><div class="es" style="left:676px"></div><div class="es" style="left:715px"></div><div class="es" style="left:816px"></div>
<div class="t" style="left:297px;top:973px">ABAP</div>
<div class="t" style="left:428px;top:973px">Ze</div><div class="t" style="left:454px;top:973px">1</div><div class="t" style="left:465px;top:973px">Sp</div><div class="t" style="left:487px;top:973px">48</div>
<div class="t" style="left:684px;top:972px">*</div>
<div class="t" style="left:824px;top:973px">NUM</div>
<div class="a" style="left:918px;top:971px;width:16px;height:17px;border:1px solid #8a8468;border-radius:3px;background:linear-gradient(#fff6d2,#ffe9a8)"></div>
<svg style="left:920px;top:973px" width="12" height="13" viewBox="0 0 12 13"><path d="M0.6 11.4V3.4L2 1.8H5V3.4" fill="#ffc414" stroke="#6a6a6a" stroke-width="0.9"/><rect x="0.6" y="3.4" width="10.8" height="8.2" fill="#ffc414" stroke="#d09a10" stroke-width="0.6"/><rect x="4.4" y="0.6" width="6.6" height="7.6" fill="#fff" stroke="#6a6a6a" stroke-width="0.9"/><path d="M5.8 2.6H9.6M5.8 4.4H9.6M5.8 6.2H9.6" stroke="#7a7a7a" stroke-width="0.8"/></svg>

<!-- bottom status bar -->
<div class="a" style="left:4px;top:1005px;width:956px;height:28px;background:linear-gradient(#ffffff,#fbfbfc 60%,#f6f6f8)"></div>
<div class="a" style="left:30px;top:1032px;width:904px;height:3px;border-radius:20px 20px 0 0/3px 3px 0 0;background:linear-gradient(#7f9fdc 0px,#6f93d8 1px,#4268c0 2.2px,#3a58b4 3px)"></div>
<svg style="left:463px;top:1009px" width="40" height="19" viewBox="0 0 40 19"><defs><linearGradient id="sg" x1="0" y1="0" x2="0" y2="1"><stop offset="0" stop-color="#1da1e6"/><stop offset="1" stop-color="#1a58bc"/></linearGradient></defs><path d="M0 0H39.2L20 18.8H0Z" fill="url(#sg)"/><text x="0.6" y="15.2" font-family="Liberation Sans" font-weight="bold" font-size="15.5" fill="#fff" stroke="#fff" stroke-width="0.5" textLength="28" lengthAdjust="spacingAndGlyphs">SAP</text></svg>
<style>.ss{position:absolute;top:1010px;width:1px;height:17px;background:linear-gradient(#f4f5f6,#d2d5da 30%,#d2d5da 70%,#f4f5f6)}</style>
<svg style="left:671px;top:1011px" width="9" height="14" viewBox="0 0 9 14"><path d="M2 2L8.6 7.6L2 13.4Z" fill="#b9c2cf" opacity="0.7"/><path d="M0.8 0.8L7.4 6.4L0.8 12.2Z" fill="#fff" stroke="#6f93c4" stroke-width="1.2" stroke-linejoin="round"/></svg>
<div class="ss" style="left:685px"></div>
<div class="t" style="left:692px;top:1013px;letter-spacing:-0.3px">SE80</div>
<svg style="left:725px;top:1015px" width="10" height="6" viewBox="0 0 10 6"><path d="M0 0H9.4L4.7 5.2Z" fill="#1f2d6b"/></svg>
<div class="ss" style="left:742px"></div>
<div class="t" style="left:748px;top:1013px;letter-spacing:-0.35px">S4HHOST2</div>
<div class="ss" style="left:815px"></div>
<div class="t" style="left:822px;top:1013px;letter-spacing:-0.2px">INS</div>
<div class="ss" style="left:847px"></div>
<svg style="left:855px;top:1011px" width="12" height="13" viewBox="0 0 12 13"><path d="M1.6 0.4V12.6M10.4 0.4V12.6" stroke="#e3e3e6" stroke-width="0.9"/><path d="M2 12.4V8.6L10 2.2V12.4Z" fill="#f7c9cf"/><path d="M6 5.4V12.4" stroke="#fbe3e6" stroke-width="0.8"/></svg>
<div class="ss" style="left:874px"></div>
<svg style="left:885px;top:1011px" width="17" height="14" viewBox="0 0 17 14"><path d="M1 0.6V7M16 7V13.4" stroke="#c9c9cc" stroke-width="1"/><path d="M3 3.8H15.6M1.6 10.2H14" stroke="#c9c9cc" stroke-width="1.2"/><path d="M2.4 3.8L6.4 1.2V6.4ZM14.6 10.2L10.6 7.6V12.8Z" fill="#c9c9cc"/></svg>
<div class="ss" style="left:912px"></div>
<svg style="left:919px;top:1011px" width="17" height="16" viewBox="0 0 17 16"><path d="M8.6 6.4V3.6Q8.6 0.8 11.8 0.8Q15 0.8 15 3.6V4.6" fill="none" stroke="#5a5a5a" stroke-width="1.7"/><rect x="0.7" y="7.2" width="10.6" height="7.4" rx="0.8" fill="#8fb2d8" stroke="#1b5e98" stroke-width="1.3"/></svg>
<svg style="left:944px;top:1019px" width="16" height="16" viewBox="0 0 16 16"><path d="M15.6 1.6L1.6 15.6M15.6 5.6L5.6 15.6M15.6 9.6L9.6 15.6" stroke="#cdd5e2" stroke-width="1.1"/><path d="M15.6 2.8L2.8 15.6M15.6 6.8L6.8 15.6M15.6 10.8L10.8 15.6" stroke="#fff" stroke-width="0.9"/></svg>

</body></html>
